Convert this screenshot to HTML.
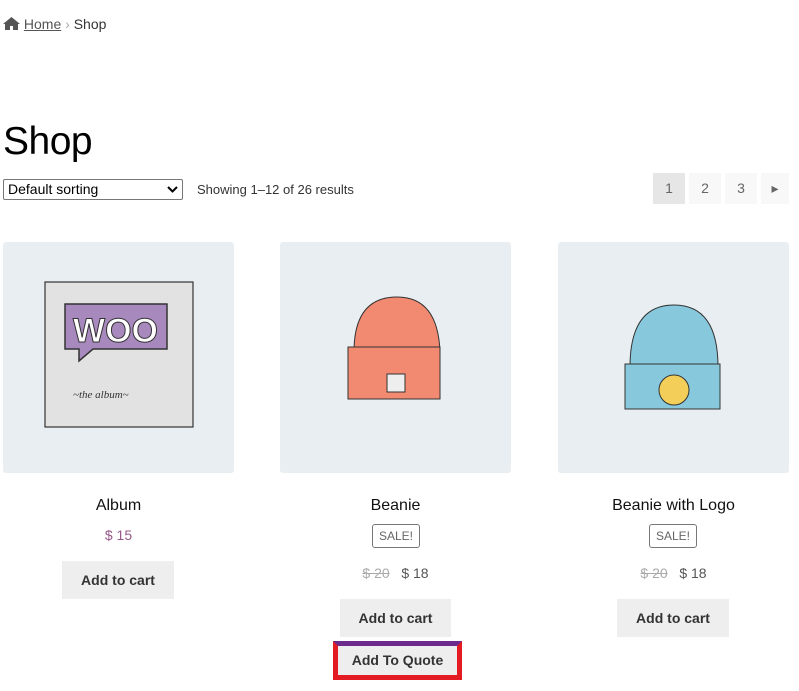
<!DOCTYPE html>
<html><head><meta charset="utf-8"><style>
*{margin:0;padding:0;box-sizing:border-box}
body{width:799px;height:691px;background:#fff;font-family:"Liberation Sans",sans-serif;color:#333;position:relative;overflow:hidden}
.a{position:absolute}
.bc{left:3px;top:16px;font-size:14px;color:#333}
.bc u{color:#555}
h1{position:absolute;left:3px;top:120px;font-size:39px;font-weight:400;color:#000;letter-spacing:-0.5px}
.sel{left:3px;top:179px;width:180px;height:21px;border:1px solid #777;border-radius:2px;font-size:14px;color:#000;padding:1px 4px}
.pg{top:173px;height:31px;background:#f8f8f8;font-size:14px;color:#666;text-align:center;line-height:31px}
.img{top:242px;width:231px;height:231px;background:#e9eef2;border-radius:3px}
.t{font-size:16px;color:#111;text-align:center;width:231px}
.p{font-size:14px;text-align:center;width:231px;color:#555}
.btn{background:#eee;font-size:14px;font-weight:bold;color:#333;text-align:center;height:38px;line-height:38px}
.sale{border:1px solid #777;border-radius:3px;font-size:12px;color:#666;width:48px;height:24px;line-height:22px;text-align:center}
</style></head><body>
<div class="a bc"><svg width="17" height="13" viewBox="0 0 17 13" style="vertical-align:-1px"><path d="M8.5 0L0 7h2v6h5V9h3v4h5V7h2z" fill="#555"/></svg> <u>Home</u> <span style="color:#aaa">›</span> Shop</div>
<h1>Shop</h1>
<div class="a sel">Default sorting<svg class="a" style="right:4px;top:6px" width="11" height="7"><path d="M1 1l4.5 4.5L10 1" stroke="#000" stroke-width="2" fill="none"/></svg></div>
<div class="a" style="left:197px;top:182px;font-size:13px;color:#333">Showing 1–12 of 26 results</div>
<div class="a pg" style="left:653px;width:32px;background:#e6e6e6">1</div>
<div class="a pg" style="left:689px;width:32px">2</div>
<div class="a pg" style="left:725px;width:32px">3</div>
<div class="a pg" style="left:761px;width:28px">▸</div>

<div class="a img" style="left:3px"><svg width="231" height="231"><rect x="42" y="40" width="148" height="145" fill="#e2e2e2" stroke="#333" stroke-width="1.2"/><path d="M62 62h102v45H90l-14 12v-12H62z" fill="#a789bd" stroke="#333" stroke-width="1.5"/><text x="70" y="100" font-size="34" font-weight="bold" fill="#fff" stroke="#333" font-family="Liberation Sans">WOO</text><text x="70" y="156" font-size="11" font-style="italic" fill="#333" font-family="Liberation Serif">~the   album~</text></svg></div>
<div class="a img" style="left:280px"><svg width="231" height="231"><path d="M74 110q0-55 43-55 41 0 43 55z" fill="#f18a70" stroke="#333"/><rect x="68" y="105" width="92" height="52" fill="#f18a70" stroke="#333"/><rect x="107" y="132" width="18" height="18" fill="#eee" stroke="#333"/></svg></div>
<div class="a img" style="left:558px"><svg width="231" height="231"><path d="M72 125q0-62 44-62 44 0 44 62z" fill="#88c8dc" stroke="#333"/><rect x="67" y="122" width="95" height="45" fill="#88c8dc" stroke="#333"/><circle cx="116" cy="148" r="15" fill="#f3cf5a" stroke="#333"/></svg></div>

<div class="a t" style="left:3px;top:497px">Album</div>
<div class="a p" style="left:3px;top:527px;color:#96588a"><span style="color:#96588a">$ 15</span></div>
<div class="a btn" style="left:62px;top:561px;width:112px">Add to cart</div>

<div class="a t" style="left:280px;top:497px">Beanie</div>
<div class="a sale" style="left:372px;top:524px">SALE!</div>
<div class="a p" style="left:280px;top:565px"><s style="color:#aaa">$ 20</s>&nbsp;&nbsp; $ 18</div>
<div class="a btn" style="left:340px;top:599px;width:111px">Add to cart</div>
<div class="a" style="left:333px;top:641px;width:129px;height:39px;border:5px solid #e31b23;border-top-color:#6b2a8c"></div>
<div class="a btn" style="left:338px;top:646px;width:119px;height:29px;line-height:29px">Add To Quote</div>

<div class="a t" style="left:558px;top:497px">Beanie with Logo</div>
<div class="a sale" style="left:649px;top:524px">SALE!</div>
<div class="a p" style="left:558px;top:565px"><s style="color:#aaa">$ 20</s>&nbsp;&nbsp; $ 18</div>
<div class="a btn" style="left:617px;top:599px;width:112px">Add to cart</div>
</body></html>
